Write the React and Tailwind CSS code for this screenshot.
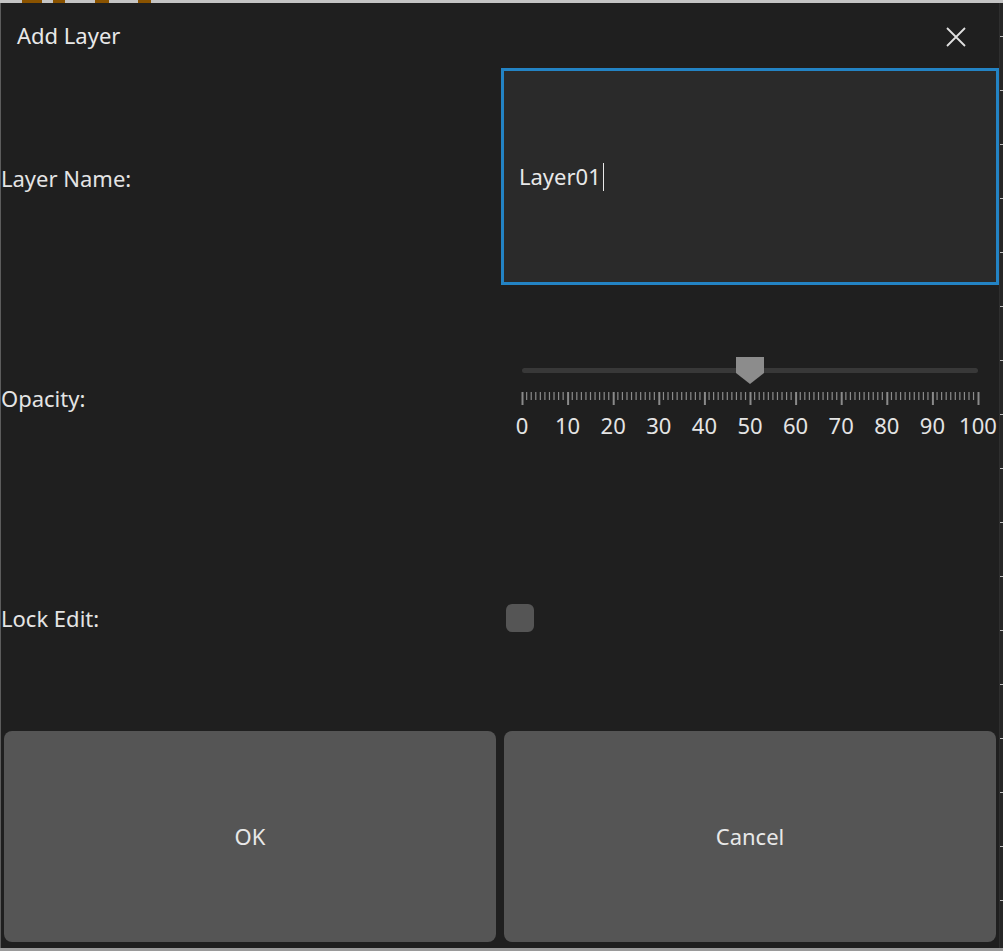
const ticks = Array.from({ length: 101 }, (_, i) => i);
const labels = [0, 10, 20, 30, 40, 50, 60, 70, 80, 90, 100];

function Slider({ value }) {
  // track spans 456px, from 0 to 100
  const pos = (v) => (v / 100) * 456;
  return (
    <div className="relative h-[82px] w-[496px]">
      <div className="absolute left-[21px] top-[11px] h-[5px] w-[456px] rounded-full bg-[#383838]" />
      <svg
        className="absolute top-0"
        style={{ left: 21 + pos(value) - 14 }}
        width="28"
        height="28"
        viewBox="0 0 28 28"
      >
        <path d="M0 0 H28 V16 L14 27 L0 16 Z" fill="#8c8c8c" />
      </svg>
      <svg className="absolute left-[19px] top-[35px]" width="462" height="16">
        {ticks.map((t) => (
          <rect
            key={t}
            x={2 + pos(t) - 0.5}
            y={0}
            width={t % 10 === 0 ? 2 : 1.2}
            height={t % 10 === 0 ? 13 : 8}
            fill="#8a8a8a"
          />
        ))}
      </svg>
      <div className="absolute left-0 top-[54px] h-[28px] w-full">
        {labels.map((l) => (
          <span
            key={l}
            className="absolute -translate-x-1/2 text-[22px] leading-[28px] text-[#e4e4e4]"
            style={{ left: 21 + pos(l) }}
          >
            {l}
          </span>
        ))}
      </div>
    </div>
  );
}

function Row({ label, children }) {
  return (
    <div className="grid grid-cols-[500px_1fr] items-center">
      <span className="text-[22px] text-[#e4e4e4]">{label}</span>
      <div className="flex h-full items-center">{children}</div>
    </div>
  );
}

export default function App() {
  return (
    <div
      className="flex h-[951px] w-[1003px] flex-col overflow-hidden bg-[#2b2b2b]"
      style={{ fontFamily: '"Noto Sans", "Open Sans", sans-serif' }}
    >
      {/* background app peeking at the top */}
      <div className="flex h-[3px] shrink-0 bg-[#c4c4c4]">
        <div className="ml-[22px] w-[20px] bg-[#8a5300]" />
        <div className="ml-[11px] w-[12px] bg-[#8a5300]" />
        <div className="ml-[30px] w-[14px] bg-[#8a5300]" />
        <div className="ml-[29px] w-[13px] bg-[#8a5300]" />
      </div>

      <div className="flex h-[945px] shrink-0">
        <div className="flex w-[999px] flex-col border-l border-[#5c5c5c] bg-[#1f1f1f]">
          <div className="flex h-[65px] shrink-0 items-center justify-between pl-[16px] pr-[33px]">
            <span className="text-[22px] text-[#e8e8e8]">Add Layer</span>
            <svg width="20" height="20" viewBox="0 0 20 20" className="mt-[2px]">
              <path d="M1 1 L19 19 M19 1 L1 19" stroke="#e0e0e0" strokeWidth="1.8" />
            </svg>
          </div>

          <div className="grid h-[880px] grid-rows-[220px_220px_220px_220px]">
            <Row label="Layer Name:">
              <div className="flex h-[217px] w-[498px] items-center self-start border-[3px] border-[#2383c4] bg-[#2a2a2a] px-[15px]">
                <span className="text-[22px] text-[#e8e8e8]">Layer01</span>
                <span className="ml-[2px] h-[28px] w-[1.5px] bg-[#e8e8e8]" />
              </div>
            </Row>
            <Row label="Opacity:">
              <Slider value={50} />
            </Row>
            <Row label="Lock Edit:">
              <div className="ml-[5px] h-[28px] w-[28px] rounded-[6px] bg-[#555555]" />
            </Row>
            <div className="grid grid-cols-2 gap-[8px] px-[3px] pt-[3px] pb-[6px]">
              <button className="rounded-[8px] bg-[#555555] text-[22px] text-[#e8e8e8]">OK</button>
              <button className="rounded-[8px] bg-[#555555] text-[22px] text-[#e8e8e8]">Cancel</button>
            </div>
          </div>
        </div>
        {/* background app strip on the right */}
        <div className="flex flex-1 flex-col items-end border-l border-[#2e2e2e] bg-[#262626] pt-[33px]">
          {Array.from({ length: 17 }, (_, i) => (
            <div key={i} className="mb-[53px] h-px w-[3px] shrink-0 bg-[#bdbdbd]" />
          ))}
        </div>
      </div>
      <div className="h-[3px] shrink-0 bg-[#9a9a9a]" />
    </div>
  );
}
